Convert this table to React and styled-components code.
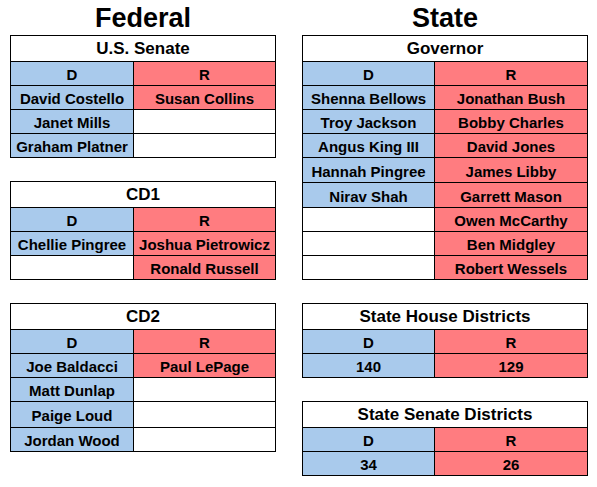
import { Fragment } from "react";
import styled, { createGlobalStyle } from "styled-components";

const GlobalStyle = createGlobalStyle`
  body {
    margin: 0;
    background: #fff;
    font-family: "Liberation Sans", Arial, sans-serif;
    color: #000;
  }
`

const BLUE = "#a9caec";
const RED = "#ff7c80";

const Page = styled.div`
  display: grid;
  grid-template-columns: 266px 286px;
  column-gap: 26px;
  padding-left: 10px;
  align-items: start;
`

const Column = styled.div`
  display: flex;
  flex-direction: column;
  gap: 23px;
`

const Heading = styled.h1`
  margin: 0 0 -23px 0;
  height: 35px;
  font-size: 27px;
  font-weight: 700;
  text-align: center;
  line-height: 35px;
  padding-top: 1px;
  box-sizing: border-box;
`

const Table = styled.div`
  display: grid;
  grid-template-columns: ${(props) => props.cols};
  gap: 1px;
  padding: 1px;
  background: #000;
`

const Title = styled.div`
  grid-column: 1 / -1;
  height: 25px;
  background: #fff;
  display: flex;
  align-items: center;
  justify-content: center;
  padding-top: 1px;
  box-sizing: border-box;
  font-size: 17px;
  font-weight: 700;
`

const Cell = styled.div`
  height: ${(props) => props.h || 23}px;
  background: ${(props) =>
    !props.filled ? "#fff" : props.party === "D" ? BLUE : RED};
  display: flex;
  align-items: center;
  justify-content: center;
  padding-top: 2px;
  box-sizing: border-box;
  font-size: 15px;
  font-weight: 700;
  white-space: nowrap;
`

const Race = ({ title, cols, rows }) => (
  <Table cols={cols}>
    <Title>{title}</Title>
    <Cell filled party="D">D</Cell>
    <Cell filled party="R">R</Cell>
    {rows.map((row, i) => (
      <Fragment key={i}>
        <Cell h={row[2]} filled={!!row[0]} party="D">{row[0]}</Cell>
        <Cell h={row[2]} filled={!!row[1]} party="R">{row[1]}</Cell>
      </Fragment>
    ))}
  </Table>
)

const FED = "122px 141px";
const STATE = "131px 152px";

const App = () => {
  return (
    <>
      <GlobalStyle />
      <Page>
        <Column>
          <Heading>Federal</Heading>
          <Race
            title="U.S. Senate"
            cols={FED}
            rows={[
              ["David Costello", "Susan Collins"],
              ["Janet Mills", ""],
              ["Graham Platner", ""],
            ]}
          />
          <Race
            title="CD1"
            cols={FED}
            rows={[
              ["Chellie Pingree", "Joshua Pietrowicz"],
              ["", "Ronald Russell"],
            ]}
          />
          <Race
            title="CD2"
            cols={FED}
            rows={[
              ["Joe Baldacci", "Paul LePage"],
              ["Matt Dunlap", ""],
              ["Paige Loud", "", 25],
              ["Jordan Wood", ""],
            ]}
          />
        </Column>
        <Column>
          <Heading>State</Heading>
          <Race
            title="Governor"
            cols={STATE}
            rows={[
              ["Shenna Bellows", "Jonathan Bush"],
              ["Troy Jackson", "Bobby Charles"],
              ["Angus King III", "David Jones"],
              ["Hannah Pingree", "James Libby", 24],
              ["Nirav Shah", "Garrett Mason", 24],
              ["", "Owen McCarthy"],
              ["", "Ben Midgley"],
              ["", "Robert Wessels"],
            ]}
          />
          <Race
            title="State House Districts"
            cols={STATE}
            rows={[["140", "129"]]}
          />
          <Race
            title="State Senate Districts"
            cols={STATE}
            rows={[["34", "26"]]}
          />
        </Column>
      </Page>
    </>
  )
}

export default App
